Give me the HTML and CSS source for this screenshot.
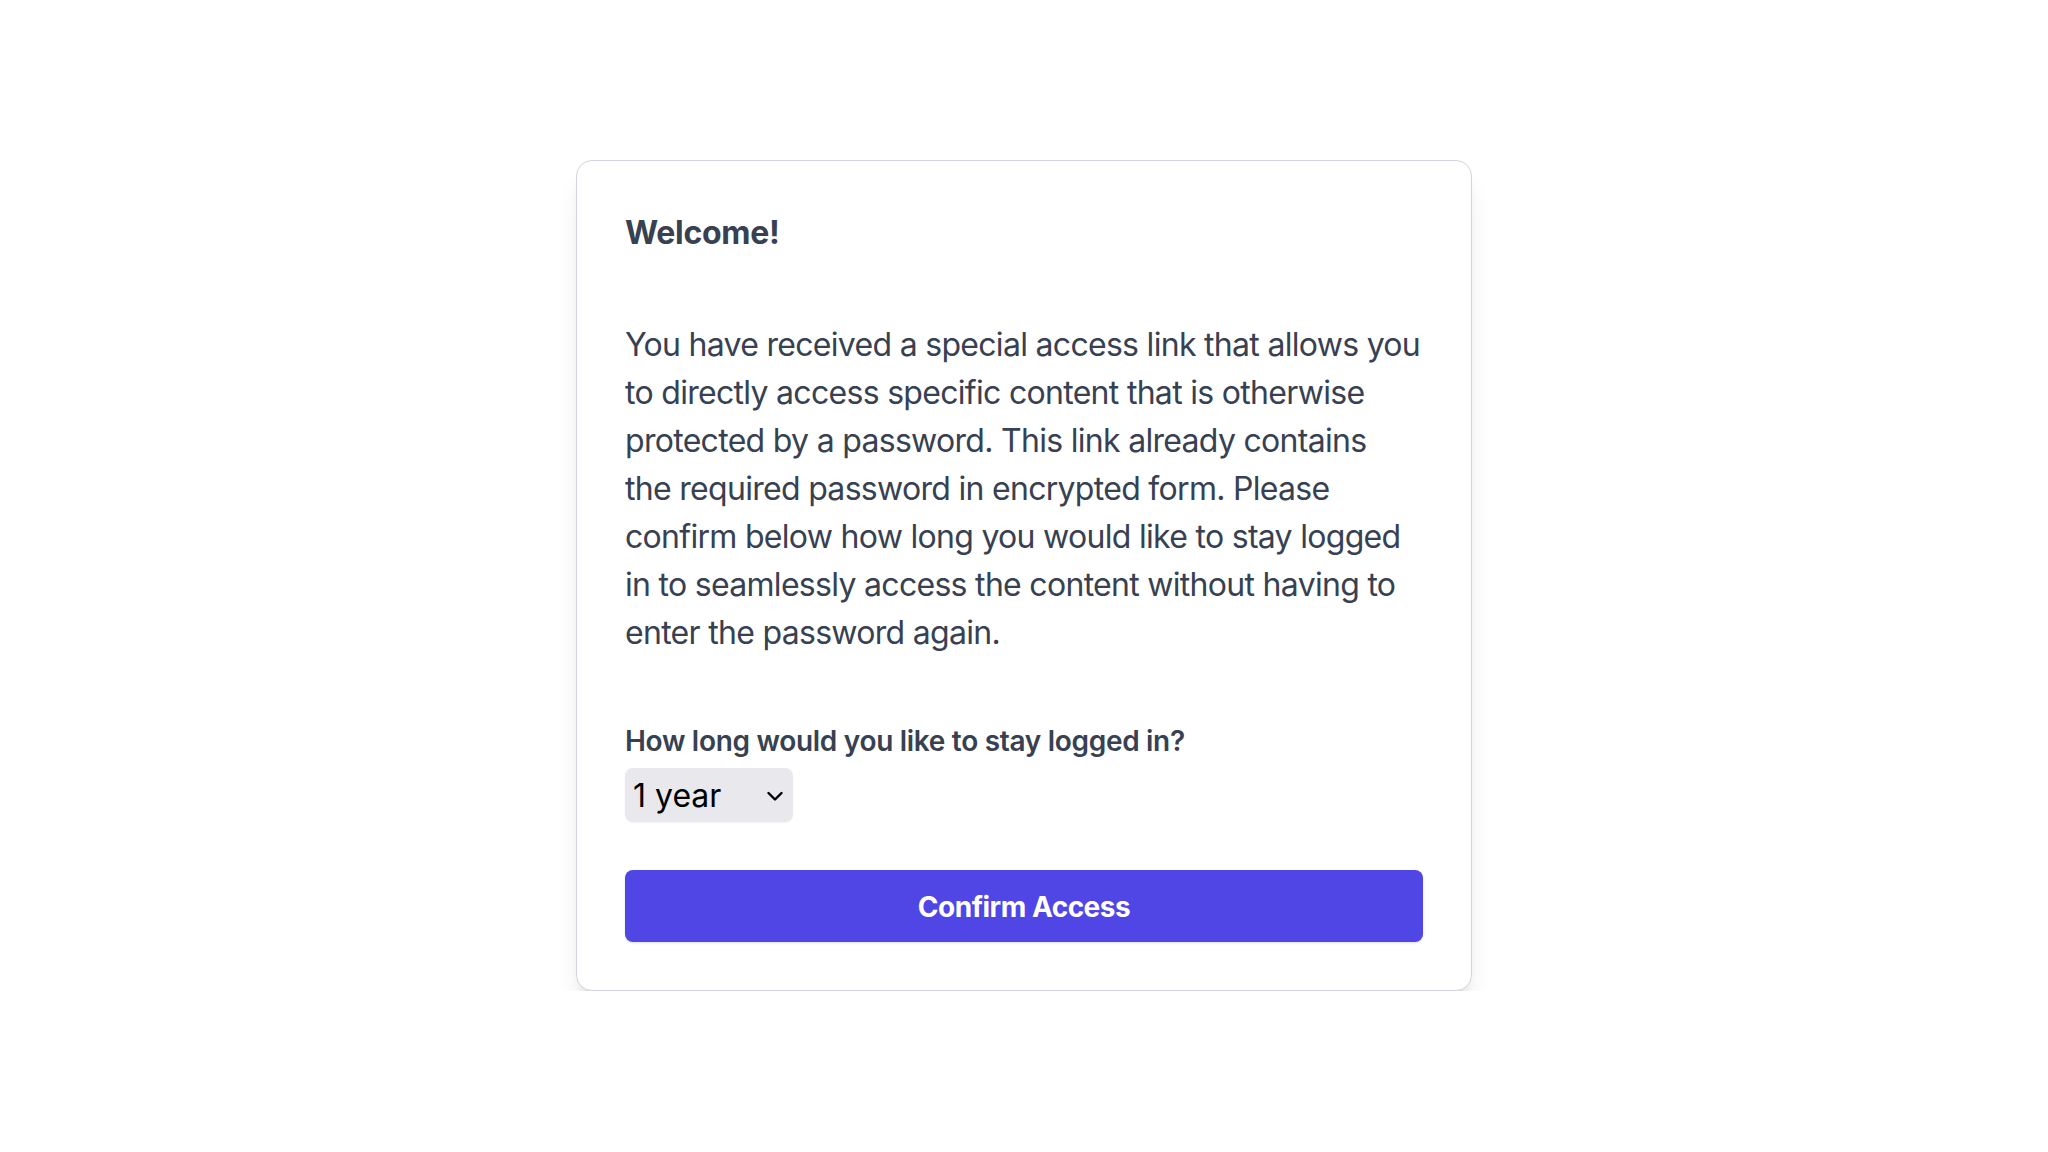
FILE: index.html
```html
<!DOCTYPE html>
<html lang="en">
<head>
<meta charset="utf-8">
<title>Welcome</title>
<link rel="stylesheet" href="styles.css">
</head>
<body>
<main class="page">
  <form class="card">
    <h1 class="title">Welcome!</h1>
    <p class="text">You have received a special access link that allows you<br>
    to directly access specific content that is otherwise<br>
    protected by a password. This link already contains<br>
    the required password in encrypted form. Please<br>
    confirm below how long you would like to stay logged<br>
    in to seamlessly access the content without having to<br>
    enter the password again.</p>
    <label class="label" for="duration">How long would you like to stay logged in?</label>
    <div class="select-wrap">
      <select id="duration" class="select">
        <option>1 year</option>
        <option>1 month</option>
        <option>1 week</option>
        <option>1 day</option>
      </select>
      <svg class="chevron" width="16" height="11" viewBox="0 0 16 11" aria-hidden="true"><path d="M1.5 2 L8 8.5 L14.5 2" fill="none" stroke="#000" stroke-width="2.4" stroke-linecap="round" stroke-linejoin="round"/></svg>
    </div>
    <button type="button" class="button">Confirm Access</button>
  </form>
</main>
</body>
</html>
```

FILE: styles.css
```css
html, body {
  margin: 0;
  padding: 0;
  background: #ffffff;
}

body {
  font-family: Inter, "Noto Sans", "Liberation Sans", sans-serif;
  color: #374151;
}

.page {
  padding-top: 160px;
}

.card {
  box-sizing: border-box;
  width: 896px;
  margin: 0 auto;
  padding: 48px;
  background: #ffffff;
  border: 1px solid #d1d5db;
  border-radius: 16px;
  box-shadow: 0 20px 25px -5px rgba(0, 0, 0, 0.1), 0 8px 10px -6px rgba(0, 0, 0, 0.1);
}

.title {
  margin: 0 0 64px;
  font-size: 32px;
  line-height: 48px;
  font-weight: 700;
  letter-spacing: -0.3px;
  color: #374151;
}

.text {
  margin: 0 0 64px;
  font-size: 32px;
  line-height: 48px;
  font-weight: 400;
  letter-spacing: -0.7px;
  color: #374151;
}

.label {
  display: block;
  margin-bottom: 7px;
  font-size: 28px;
  line-height: 40px;
  font-weight: 600;
  letter-spacing: -0.3px;
  color: #374151;
}

.select-wrap {
  position: relative;
  display: inline-block;
  vertical-align: top;
}

.select {
  -webkit-appearance: none;
  appearance: none;
  box-sizing: border-box;
  width: 168px;
  height: 54px;
  margin: 0;
  padding: 0 0 0 8px;
  border: none;
  border-radius: 8px;
  background: #e9e9ed;
  font-family: Inter, "Noto Sans", "Liberation Sans", sans-serif;
  font-size: 32px;
  color: #000000;
  box-shadow: 0 1px 2px rgba(0, 0, 0, 0.05);
}

.chevron {
  position: absolute;
  right: 10px;
  top: 23px;
  pointer-events: none;
}

.button {
  display: block;
  box-sizing: border-box;
  width: 100%;
  height: 72px;
  margin-top: 48px;
  padding-top: 2px;
  border: none;
  border-radius: 8px;
  background: #4f46e5;
  color: #ffffff;
  font-family: Inter, "Noto Sans", "Liberation Sans", sans-serif;
  font-size: 28px;
  font-weight: 700;
  letter-spacing: -0.5px;
  box-shadow: 0 1px 3px rgba(0, 0, 0, 0.1), 0 1px 2px -1px rgba(0, 0, 0, 0.1);
  cursor: pointer;
}
```
